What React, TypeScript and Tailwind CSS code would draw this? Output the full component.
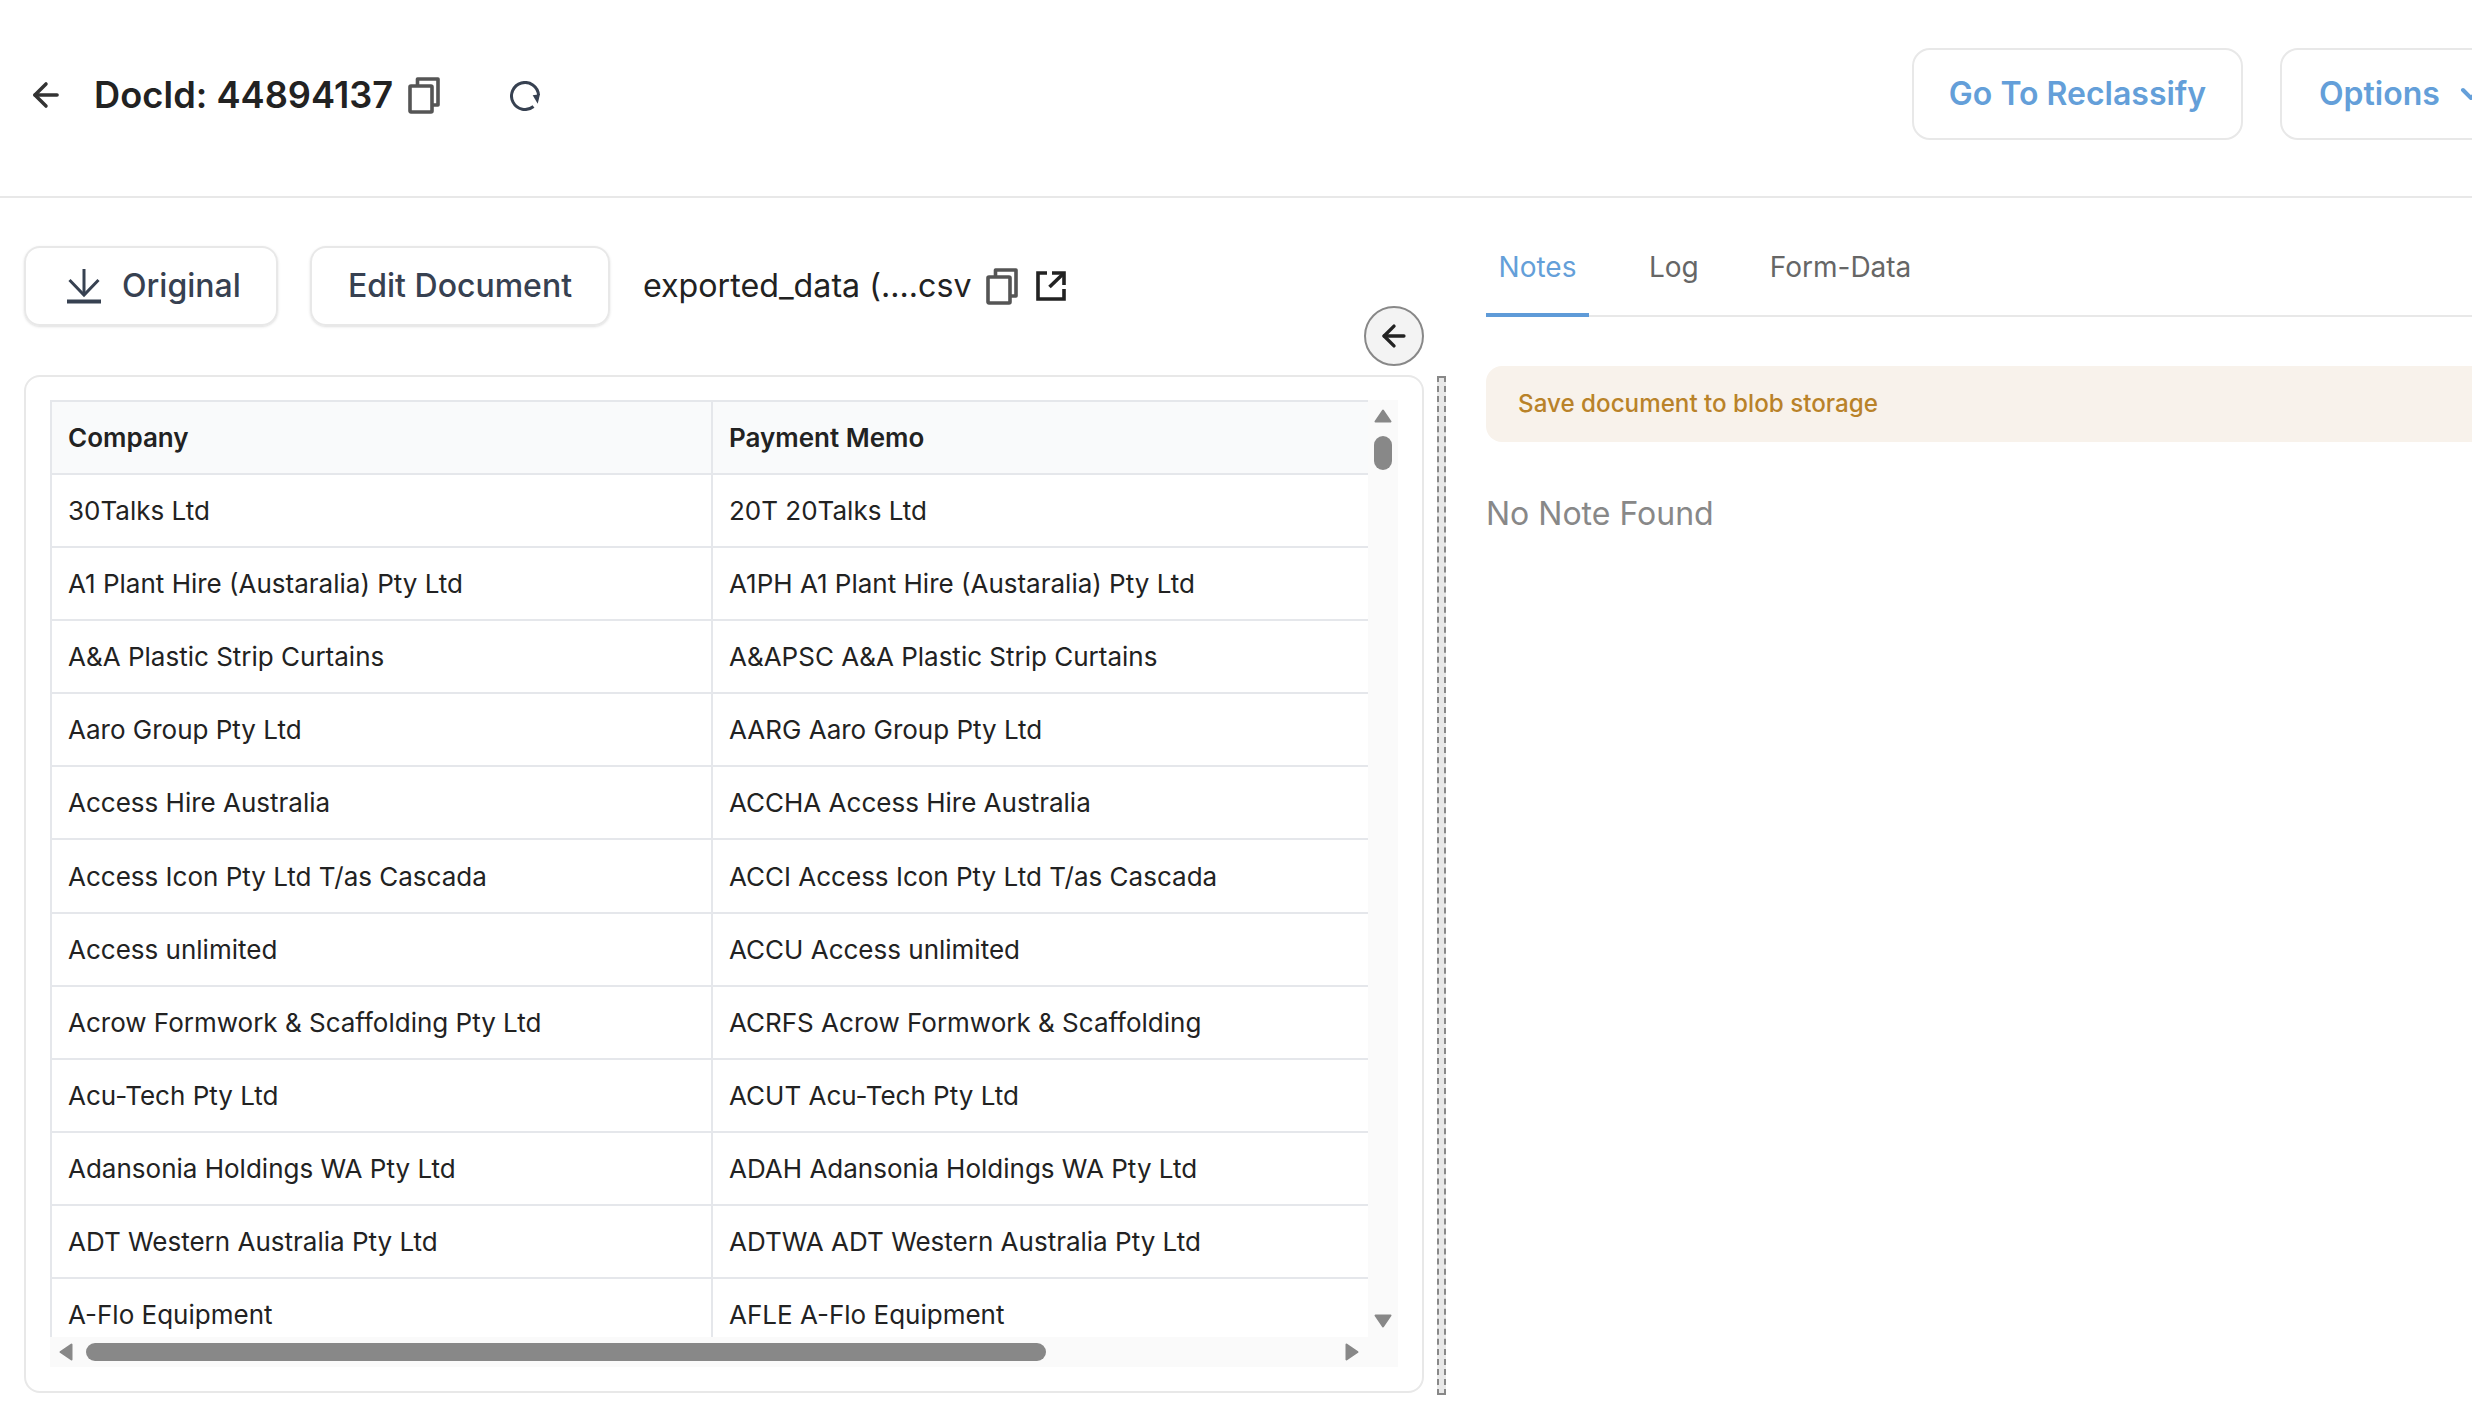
import React from 'react';
import { ArrowLeft, ChevronDown } from 'lucide-react';

const rows = [
  ['30Talks Ltd', '20T 20Talks Ltd'],
  ['A1 Plant Hire (Austaralia) Pty Ltd', 'A1PH A1 Plant Hire (Austaralia) Pty Ltd'],
  ['A&A Plastic Strip Curtains', 'A&APSC A&A Plastic Strip Curtains'],
  ['Aaro Group Pty Ltd', 'AARG Aaro Group Pty Ltd'],
  ['Access Hire Australia', 'ACCHA Access Hire Australia'],
  ['Access Icon Pty Ltd T/as Cascada', 'ACCI Access Icon Pty Ltd T/as Cascada'],
  ['Access unlimited', 'ACCU Access unlimited'],
  ['Acrow Formwork & Scaffolding Pty Ltd', 'ACRFS Acrow Formwork & Scaffolding'],
  ['Acu-Tech Pty Ltd', 'ACUT Acu-Tech Pty Ltd'],
  ['Adansonia Holdings WA Pty Ltd', 'ADAH Adansonia Holdings WA Pty Ltd'],
  ['ADT Western Australia Pty Ltd', 'ADTWA ADT Western Australia Pty Ltd'],
  ['A-Flo Equipment', 'AFLE A-Flo Equipment'],
];

const CopyIcon = ({ className }: { className?: string }) => (
  <svg viewBox="0 0 32 37" className={className} fill="none" stroke="#555" strokeWidth="3.600" strokeLinejoin="round">
    <path d="M9.500 8V2H30v26h-6" />
    <rect x="2" y="9" width="22" height="26" rx="1" />
  </svg>
);

const ExternalIcon = () => (
  <svg viewBox="0 0 30 30" className="h-[30px] w-[30px]" fill="none" stroke="#222" strokeWidth="3.600">
    <path d="M11 2H2v26h26v-10" />
    <path d="M13.500 16 27 3" />
    <path d="M16 2h12v12" />
  </svg>
);

const RefreshIcon = () => (
  <svg viewBox="0 0 30 30" className="h-[30px] w-[30px]" fill="none">
    <path d="M23.500 25.500A13.500 13.500 0 1 1 28.500 14" stroke="#374151" strokeWidth="3" />
    <path d="M22.700 14.300 30 13.300 27.700 22.700z" fill="#374151" />
  </svg>
);

const DownloadIcon = () => (
  <svg viewBox="0 0 34 35" className="h-[35px] w-[34px]" fill="none" stroke="#374151" strokeWidth="3">
    <path d="M17 0v26" />
    <path d="M2.500 11 17 26 31.500 11" />
    <path d="M0 32.500h34" strokeWidth="4" />
  </svg>
);

// Scrollbar arrow, rotated per direction
const ScrollArrow = ({ className }: { className?: string }) => (
  <svg viewBox="0 0 18 14" className={`h-[14px] w-[18px] ${className ?? ''}`}>
    <path d="M9 1.500 16.500 12.500H1.500z" fill="#888" stroke="#888" strokeWidth="2" strokeLinejoin="round" />
  </svg>
);

export default function App() {
  return (
    <div className="flex h-[1402px] w-[2472px] flex-col overflow-hidden bg-white font-['Inter',sans-serif] text-[#222]">
      {/* Header */}
      <div className="flex h-[198px] shrink-0 items-center border-b-2 border-[#e8e8e8] pb-[6px]">
        <ArrowLeft size={38} strokeWidth={2.2} className="ml-[27px] text-[#333]" />
        <h1 className="ml-[29px] text-[36.200px] font-semibold leading-none">DocId: 44894137</h1>
        <CopyIcon className="ml-[15px] h-[37px] w-[32px]" />
        <div className="ml-[70px] mt-[2px]"><RefreshIcon /></div>
        <div className="mb-[2px] ml-auto flex shrink-0 gap-[37px]">
          <button className="flex h-[92px] w-[331px] items-center justify-center rounded-[18px] border-2 border-[#e8e8e8] text-[32px] font-semibold text-[#649fd9]">Go To Reclassify</button>
          <button className="-mr-[58px] flex h-[92px] w-[250px] items-center gap-[15px] rounded-[18px] border-2 border-[#e8e8e8] pl-[37px] text-[32px] font-semibold text-[#649fd9]">
            Options
            <ChevronDown size={32} strokeWidth={3} />
          </button>
        </div>
      </div>

      {/* Body */}
      <div className="flex min-h-0 flex-1">
        <div className="relative w-[1437px] shrink-0 pl-[24px] pt-[48px]">
          <div className="flex h-[80px] items-center">
            <button className="flex h-[80px] w-[254px] items-center gap-[21px] rounded-[16px] border-2 border-[#e8e8e8] pl-[41px] text-[32px] font-medium text-[#374151] shadow-sm">
              <DownloadIcon />
              Original
            </button>
            <button className="ml-[32px] h-[80px] w-[300px] rounded-[16px] border-2 border-[#e8e8e8] text-[32px] font-medium text-[#374151] shadow-sm">Edit Document</button>
            <span className="ml-[33px] text-[32.200px]">exported_data (....csv</span>
            <CopyIcon className="ml-[14px] h-[37px] w-[32px]" />
            <div className="ml-[18px]"><ExternalIcon /></div>
          </div>

          <button className="absolute left-[1364px] top-[108px] flex h-[60px] w-[60px] items-center justify-center rounded-full border-2 border-[#888] bg-[#f3f3f3]">
            <ArrowLeft size={34} strokeWidth={2.4} className="text-[#222]" />
          </button>

          {/* Table card */}
          <div className="mt-[49px] h-[1018px] w-[1400px] rounded-[16px] border-2 border-[#e8e8e8] pl-[24px] pt-[23px]">
            <div className="flex h-[967px] w-[1348px] flex-col bg-[#fafafa]">
              <div className="flex h-[937px]">
                <div className="h-[937px] w-[1318px] overflow-hidden bg-white text-[26px]">
                  <div className="grid h-[75px] grid-cols-[661px_657px] border-t-2 border-b-2 border-[#e5e7eb] bg-[#f9fafb] font-semibold">
                    <div className="flex items-center border-l-2 border-[#e5e7eb] pl-[16px]">Company</div>
                    <div className="flex items-center border-l-2 border-[#e5e7eb] pl-[16px]">Payment Memo</div>
                  </div>
                  {rows.map(([company, memo]) => (
                    <div key={company} className="grid h-[73.1px] grid-cols-[661px_657px] border-b-2 border-[#e5e7eb]">
                      <div className="flex items-center border-l-2 border-[#e5e7eb] pl-[16px]">{company}</div>
                      <div className="flex items-center border-l-2 border-[#e5e7eb] pl-[16px]">{memo}</div>
                    </div>
                  ))}
                </div>
                {/* Vertical scrollbar */}
                <div className="flex w-[30px] flex-col items-center">
                  <ScrollArrow className="mt-[9px]" />
                  <div className="mt-[13px] h-[34px] w-[18px] rounded-full bg-[#888]" />
                  <ScrollArrow className="mb-[9px] mt-auto rotate-180" />
                </div>
              </div>
              {/* Horizontal scrollbar */}
              <div className="flex h-[30px] items-center">
                <ScrollArrow className="ml-[7px] -rotate-90" />
                <div className="ml-[11px] h-[18px] w-[960px] rounded-full bg-[#888]" />
                <ScrollArrow className="ml-[297px] rotate-90" />
              </div>
            </div>
          </div>
        </div>

        {/* Resize handle */}
        <div className="mt-[178px] h-[1019px] w-[9px] shrink-0 border-2 border-dashed border-[#888] bg-[#e8e8e8]" />

        {/* Right panel */}
        <div className="ml-[40px] w-[1100px] shrink-0">
          <div className="flex h-[119px] items-end border-b-2 border-[#e8e8e8] text-[28px] text-[#666]">
            <div className="-mb-[2px] flex h-[71px] w-[103px] items-start justify-center border-b-4 border-[#5f9bd8] text-[#649fd9]">Notes</div>
            <div className="ml-[60px] h-[69px]">Log</div>
            <div className="ml-[71px] h-[69px]">Form-Data</div>
          </div>
          <div className="mt-[49px] flex h-[76px] items-center rounded-[16px] bg-[#f8f2eb] pl-[32px] text-[24.200px] font-medium text-[#b98229]">Save document to blob storage</div>
          <p className="mt-[48px] text-[32px] text-[#888]">No Note Found</p>
        </div>
      </div>
    </div>
  );
}
